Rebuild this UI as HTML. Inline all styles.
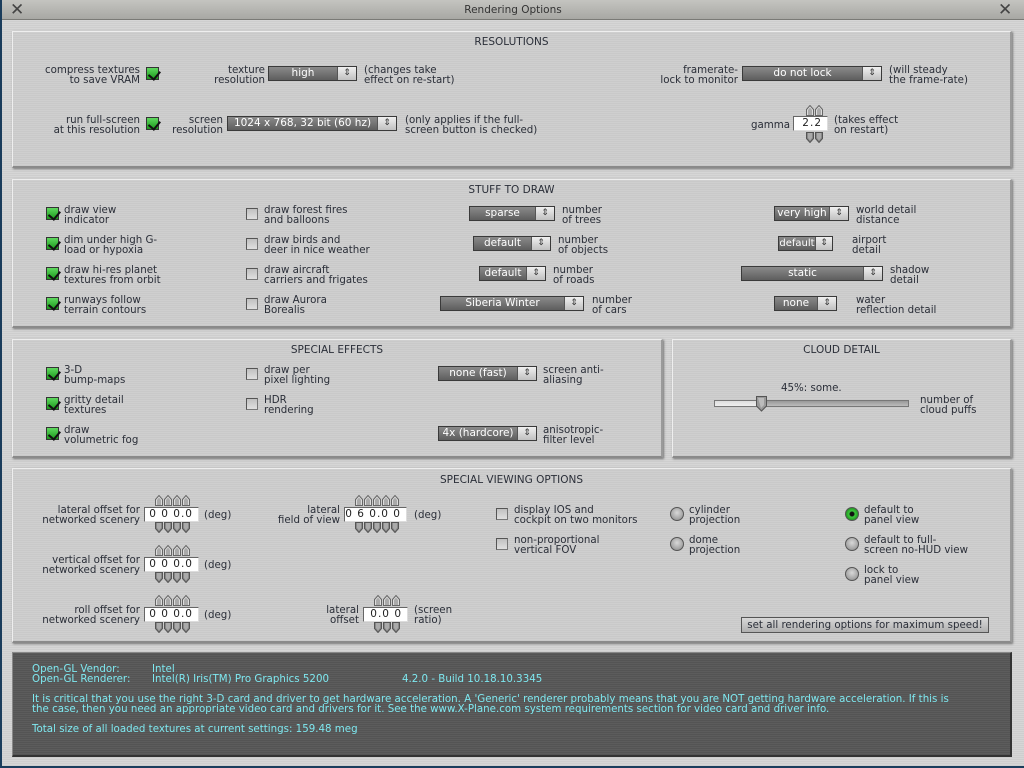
<!DOCTYPE html>
<html><head><meta charset="utf-8"><style>
*{box-sizing:border-box;margin:0;padding:0}
body{width:1024px;height:768px;overflow:hidden;background:#1b3d5c;font-family:"DejaVu Sans","Liberation Sans",sans-serif;font-size:10.25px;color:#2a2e38;position:relative}
#win{position:absolute;left:2px;top:0;width:1022px;height:766px;background:repeating-linear-gradient(#d6d6d6 0 1px,#cecece 1px 2px)}
#title{position:absolute;left:0;top:0;width:1022px;height:20px;background:linear-gradient(#c4c4c0,#a8a8a4);border-bottom:1px solid #7a7a76;text-align:center;line-height:20px;color:#333;font-size:10.5px}
.x{position:absolute;top:1px;font-size:17px;color:#444;line-height:18px}
.p{position:absolute;background:repeating-linear-gradient(#cfcfcf 0 1px,#c9c9c9 1px 2px);border:1px solid #eee;border-right:2px solid #9a9a9a;border-bottom:2px solid #8a8a8a;box-shadow:1px 1px 2px #777}
.h{position:absolute;width:100%;text-align:center;top:9px;color:#2a2e38;font-size:10.5px}
.t{position:absolute;line-height:10px;white-space:nowrap}
.r{text-align:right}
.cb{position:absolute;width:13px;height:13px;background:linear-gradient(#5ed85e,#1c9a1c);border:1px solid #333}
.cb::after{content:"";position:absolute;left:1px;top:0;width:9px;height:6px;border-left:2px solid #111;border-bottom:2px solid #111;transform:rotate(-50deg) translate(-1px,2px)}
.ub{position:absolute;width:12px;height:12px;background:linear-gradient(#c0c0c0,#e0e0e0);border:1px solid #777;border-top-color:#555;border-left-color:#555}
.dd{position:absolute;height:15px;background:linear-gradient(#8a8a8a,#5e5e5e);border:1px solid #3a3a3a;color:#fff;line-height:13px;text-align:center;padding-right:19px;white-space:nowrap;overflow:hidden;font-size:10.5px}
.dd i{position:absolute;right:0;top:0;width:19px;height:13px;background:linear-gradient(#f0f0f0,#c0c0c0);border-left:1px solid #555;color:#333;font-style:normal;font-size:9px;line-height:13px;text-align:center}
.f{position:absolute;height:15px;background:#fff;border:1px solid #666;border-right-color:#ddd;border-bottom-color:#ddd;line-height:13px;text-align:right;padding-right:5px;color:#222;letter-spacing:1px;font-size:10.5px}
.ar{position:absolute;height:11px}
.rd{position:absolute;width:14px;height:14px;border-radius:50%;background:radial-gradient(circle at 50% 40%,#d8d8d8,#888);border:1px solid #555}
.rd.on{background:radial-gradient(circle at 50% 50%,#111 0 2px,#3ec83e 3px,#1a8a1a 7px)}
#gl{position:absolute;left:12px;top:652px;width:1000px;height:105px;background:repeating-linear-gradient(#5c5c5c 0 1px,#545454 1px 2px);border:1px solid #888;border-right:2px solid #333;border-bottom:2px solid #333;color:#7ee8f0}
#gl .t{line-height:10px}
.btn{position:absolute;left:741px;top:617px;width:248px;height:16px;background:linear-gradient(#d8d8d8,#b0b0b0);border:1px solid #555;text-align:center;line-height:14px;white-space:nowrap}
</style></head><body>
<svg width="0" height="0" style="position:absolute"><defs>
<g id="u"><path d="M0.5 10.5V4.5L4 0.5L7.5 4.5V10.5Z" fill="#ddd" stroke="#666"/><path d="M2 10V5L4 2.5L6 5V10" fill="#aaa"/></g>
<g id="d"><path d="M0.5 0.5V6.5L4 10.5L7.5 6.5V0.5Z" fill="#888" stroke="#555"/><path d="M2 1V6L4 8.5L6 6V1" fill="#aaa"/></g>
</defs></svg>
<div id="win">
<div id="title">Rendering Options</div>
<div class="x" style="left:8px">✕</div><div class="x" style="left:996px">✕</div>
</div>

<div class="p" style="left:12px;top:31px;width:1000px;height:137px"><div class="h" style="top:4px">RESOLUTIONS</div></div>
<div class="t r" style="right:884px;top:65px">compress textures<br>to save VRAM</div>
<div class="cb" style="left:146px;top:67px"></div>
<div class="t r" style="right:759px;top:65px">texture<br>resolution</div>
<div class="dd" style="left:268px;top:66px;width:89px">high<i>⇕</i></div>
<div class="t" style="left:364px;top:65px">(changes take<br>effect on re-start)</div>
<div class="t r" style="right:286px;top:65px">framerate-<br>lock to monitor</div>
<div class="dd" style="left:742px;top:66px;width:140px">do not lock<i>⇕</i></div>
<div class="t" style="left:889px;top:65px">(will steady<br>the frame-rate)</div>
<div class="t r" style="right:884px;top:115px">run full-screen<br>at this resolution</div>
<div class="cb" style="left:146px;top:117px"></div>
<div class="t r" style="right:801px;top:115px">screen<br>resolution</div>
<div class="dd" style="left:227px;top:116px;width:170px">1024 x 768, 32 bit (60 hz)<i>⇕</i></div>
<div class="t" style="left:405px;top:115px">(only applies if the full-<br>screen button is checked)</div>
<div class="t" style="left:751px;top:120px">gamma</div>
<div class="f" style="left:793px;top:116px;width:35px">2.2</div>
<svg class="ar" style="left:806px;top:105px" width="18"><use href="#u"/><use href="#u" x="9"/></svg>
<svg class="ar" style="left:806px;top:132px" width="18"><use href="#d"/><use href="#d" x="9"/></svg>
<div class="t" style="left:834px;top:115px">(takes effect<br>on restart)</div>

<div class="p" style="left:12px;top:179px;width:1000px;height:149px"><div class="h" style="top:4px">STUFF TO DRAW</div></div>
<div class="cb" style="left:46px;top:207px"></div><div class="t" style="left:64px;top:205px">draw view<br>indicator</div>
<div class="cb" style="left:46px;top:237px"></div><div class="t" style="left:64px;top:235px">dim under high G-<br>load or hypoxia</div>
<div class="cb" style="left:46px;top:267px"></div><div class="t" style="left:64px;top:265px">draw hi-res planet<br>textures from orbit</div>
<div class="cb" style="left:46px;top:297px"></div><div class="t" style="left:64px;top:295px">runways follow<br>terrain contours</div>
<div class="ub" style="left:246px;top:208px"></div><div class="t" style="left:264px;top:205px">draw forest fires<br>and balloons</div>
<div class="ub" style="left:246px;top:238px"></div><div class="t" style="left:264px;top:235px">draw birds and<br>deer in nice weather</div>
<div class="ub" style="left:246px;top:268px"></div><div class="t" style="left:264px;top:265px">draw aircraft<br>carriers and frigates</div>
<div class="ub" style="left:246px;top:298px"></div><div class="t" style="left:264px;top:295px">draw Aurora<br>Borealis</div>
<div class="dd" style="left:469px;top:206px;width:86px">sparse<i>⇕</i></div><div class="t" style="left:562px;top:205px">number<br>of trees</div>
<div class="dd" style="left:473px;top:236px;width:78px">default<i>⇕</i></div><div class="t" style="left:558px;top:235px">number<br>of objects</div>
<div class="dd" style="left:479px;top:266px;width:67px">default<i>⇕</i></div><div class="t" style="left:553px;top:265px">number<br>of roads</div>
<div class="dd" style="left:440px;top:296px;width:144px">Siberia Winter<i>⇕</i></div><div class="t" style="left:592px;top:295px">number<br>of cars</div>
<div class="dd" style="left:774px;top:206px;width:75px">very high<i>⇕</i></div><div class="t" style="left:856px;top:205px">world detail<br>distance</div>
<div class="dd" style="left:778px;top:236px;width:55px;padding-right:17px;font-size:10px">default<i style="width:17px">⇕</i></div><div class="t" style="left:852px;top:235px">airport<br>detail</div>
<div class="dd" style="left:741px;top:266px;width:142px">static<i>⇕</i></div><div class="t" style="left:890px;top:265px">shadow<br>detail</div>
<div class="dd" style="left:774px;top:296px;width:63px">none<i>⇕</i></div><div class="t" style="left:856px;top:295px">water<br>reflection detail</div>

<div class="p" style="left:12px;top:339px;width:651px;height:119px"><div class="h" style="top:4px">SPECIAL EFFECTS</div></div>
<div class="cb" style="left:46px;top:367px"></div><div class="t" style="left:64px;top:365px">3-D<br>bump-maps</div>
<div class="cb" style="left:46px;top:397px"></div><div class="t" style="left:64px;top:395px">gritty detail<br>textures</div>
<div class="cb" style="left:46px;top:427px"></div><div class="t" style="left:64px;top:425px">draw<br>volumetric fog</div>
<div class="ub" style="left:246px;top:368px"></div><div class="t" style="left:264px;top:365px">draw per<br>pixel lighting</div>
<div class="ub" style="left:246px;top:398px"></div><div class="t" style="left:264px;top:395px">HDR<br>rendering</div>
<div class="dd" style="left:438px;top:366px;width:99px">none (fast)<i>⇕</i></div><div class="t" style="left:543px;top:365px">screen anti-<br>aliasing</div>
<div class="dd" style="left:438px;top:426px;width:99px">4x (hardcore)<i>⇕</i></div><div class="t" style="left:543px;top:425px">anisotropic-<br>filter level</div>

<div class="p" style="left:672px;top:339px;width:340px;height:119px"><div class="h" style="top:4px">CLOUD DETAIL</div></div>
<div class="t" style="left:781px;top:383px">45%: some.</div>
<div style="position:absolute;left:714px;top:400px;width:195px;height:7px;background:linear-gradient(#999,#bbb);border:1px solid #777"></div>
<div style="position:absolute;left:714px;top:400px;width:48px;height:7px;background:linear-gradient(#ddd,#eee);border:1px solid #777"></div>
<svg style="position:absolute;left:756px;top:396px" width="12" height="17"><path d="M0.5 0.5H10.5V10L5.5 15L0.5 10Z" fill="#999" stroke="#555"/><path d="M2 2H8V9L5 12" fill="#bbb"/></svg>
<div class="t" style="left:920px;top:395px">number of<br>cloud puffs</div>

<div class="p" style="left:12px;top:468px;width:1000px;height:175px"><div class="h" style="top:5px">SPECIAL VIEWING OPTIONS</div></div>
<div class="t r" style="right:884px;top:505px">lateral offset for<br>networked scenery</div>
<div class="f" style="left:144px;top:507px;width:55px">0 0 0.0</div>
<svg class="ar" style="left:155px;top:495px" width="36"><use href="#u"/><use href="#u" x="9"/><use href="#u" x="18"/><use href="#u" x="27"/></svg>
<svg class="ar" style="left:155px;top:522px" width="36"><use href="#d"/><use href="#d" x="9"/><use href="#d" x="18"/><use href="#d" x="27"/></svg>
<div class="t" style="left:204px;top:510px">(deg)</div>
<div class="t r" style="right:884px;top:555px">vertical offset for<br>networked scenery</div>
<div class="f" style="left:144px;top:557px;width:55px">0 0 0.0</div>
<svg class="ar" style="left:155px;top:545px" width="36"><use href="#u"/><use href="#u" x="9"/><use href="#u" x="18"/><use href="#u" x="27"/></svg>
<svg class="ar" style="left:155px;top:572px" width="36"><use href="#d"/><use href="#d" x="9"/><use href="#d" x="18"/><use href="#d" x="27"/></svg>
<div class="t" style="left:204px;top:560px">(deg)</div>
<div class="t r" style="right:884px;top:605px">roll offset for<br>networked scenery</div>
<div class="f" style="left:144px;top:607px;width:55px">0 0 0.0</div>
<svg class="ar" style="left:155px;top:595px" width="36"><use href="#u"/><use href="#u" x="9"/><use href="#u" x="18"/><use href="#u" x="27"/></svg>
<svg class="ar" style="left:155px;top:622px" width="36"><use href="#d"/><use href="#d" x="9"/><use href="#d" x="18"/><use href="#d" x="27"/></svg>
<div class="t" style="left:204px;top:610px">(deg)</div>
<div class="t r" style="right:684px;top:505px">lateral<br>field of view</div>
<div class="f" style="left:344px;top:507px;width:63px">0 6 0.0 0</div>
<svg class="ar" style="left:355px;top:495px" width="45"><use href="#u"/><use href="#u" x="9"/><use href="#u" x="18"/><use href="#u" x="27"/><use href="#u" x="36"/></svg>
<svg class="ar" style="left:355px;top:522px" width="45"><use href="#d"/><use href="#d" x="9"/><use href="#d" x="18"/><use href="#d" x="27"/><use href="#d" x="36"/></svg>
<div class="t" style="left:414px;top:510px">(deg)</div>
<div class="t r" style="right:665px;top:605px">lateral<br>offset</div>
<div class="f" style="left:363px;top:607px;width:45px">0.0 0</div>
<svg class="ar" style="left:374px;top:595px" width="27"><use href="#u"/><use href="#u" x="9"/><use href="#u" x="18"/></svg>
<svg class="ar" style="left:374px;top:622px" width="27"><use href="#d"/><use href="#d" x="9"/><use href="#d" x="18"/></svg>
<div class="t" style="left:414px;top:605px">(screen<br>ratio)</div>
<div class="ub" style="left:496px;top:508px"></div><div class="t" style="left:514px;top:505px">display IOS and<br>cockpit on two monitors</div>
<div class="ub" style="left:496px;top:538px"></div><div class="t" style="left:514px;top:535px">non-proportional<br>vertical FOV</div>
<div class="rd" style="left:670px;top:507px"></div><div class="t" style="left:689px;top:505px">cylinder<br>projection</div>
<div class="rd" style="left:670px;top:537px"></div><div class="t" style="left:689px;top:535px">dome<br>projection</div>
<div class="rd on" style="left:845px;top:507px"></div><div class="t" style="left:864px;top:505px">default to<br>panel view</div>
<div class="rd" style="left:845px;top:537px"></div><div class="t" style="left:864px;top:535px">default to full-<br>screen no-HUD view</div>
<div class="rd" style="left:845px;top:567px"></div><div class="t" style="left:864px;top:565px">lock to<br>panel view</div>
<div class="btn">set all rendering options for maximum speed!</div>

<div id="gl">
<div class="t" style="left:19px;top:11px">Open-GL Vendor:<br>Open-GL Renderer:</div>
<div class="t" style="left:139px;top:11px">Intel<br>Intel(R) Iris(TM) Pro Graphics 5200</div>
<div class="t" style="left:389px;top:21px">4.2.0 - Build 10.18.10.3345</div>
<div class="t" style="left:19px;top:41px">It is critical that you use the right 3-D card and driver to get hardware acceleration. A 'Generic' renderer probably means that you are NOT getting hardware acceleration. If this is<br>the case, then you need an appropriate video card and drivers for it. See the www.X-Plane.com system requirements section for video card and driver info.</div>
<div class="t" style="left:19px;top:71px">Total size of all loaded textures at current settings: 159.48 meg</div>
</div>
</body></html>
